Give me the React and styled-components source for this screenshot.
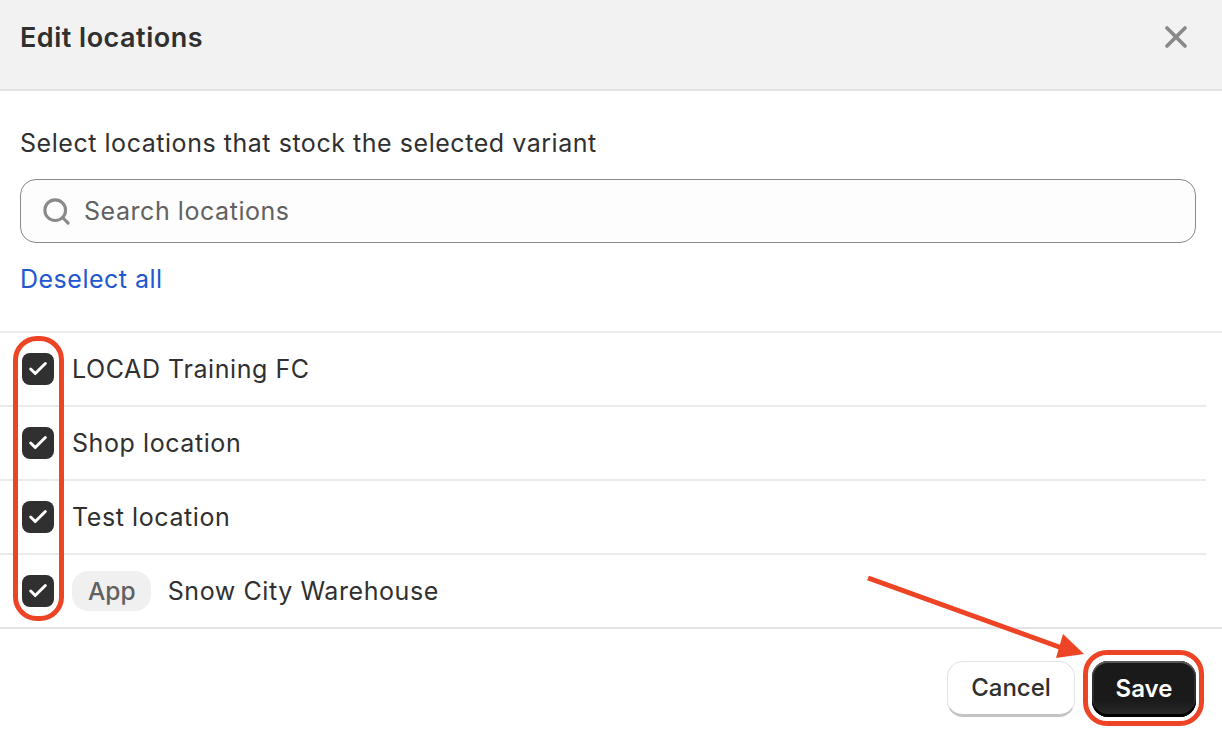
import React from "react";
import styled, { createGlobalStyle } from "styled-components";
import { Search, X, Check } from "lucide-react";

const locations = [
  { name: "LOCAD Training FC" },
  { name: "Shop location" },
  { name: "Test location" },
  { name: "Snow City Warehouse", badge: "App" },
];

export default function App() {
  return (
    <>
      <GlobalStyle />
      <Modal>
        <Header>
          <Title>Edit locations</Title>
          <CloseButton aria-label="Close">
            <X size={36} strokeWidth={2.5} />
          </CloseButton>
        </Header>

        <Body>
          <Prompt>Select locations that stock the selected variant</Prompt>
          <SearchBox>
            <Search size={31} strokeWidth={2.4} color="#8a8a8a" />
            <SearchInput placeholder="Search locations" />
          </SearchBox>
          <LinkButton>Deselect all</LinkButton>
        </Body>

        <List>
          <ColumnRing />
          {locations.map((loc, i) => (
            <Row key={loc.name} $last={i === locations.length - 1}>
              <CheckBox>
                <Check size={22} strokeWidth={3.2} color="#fff" />
              </CheckBox>
              {loc.badge && <Badge>{loc.badge}</Badge>}
              <RowLabel $badge={!!loc.badge}>{loc.name}</RowLabel>
            </Row>
          ))}
        </List>

        <Footer>
          <Arrow viewBox="0 0 240 100" aria-hidden="true">
            <line x1="2" y1="2" x2="196" y2="72" stroke="#ee4426" strokeWidth="5" />
            <polygon points="218,78 190,82 197,58" fill="#ee4426" />
          </Arrow>
          <CancelButton>Cancel</CancelButton>
          <SaveWrap>
            <SaveButton>Save</SaveButton>
            <SaveRing />
          </SaveWrap>
        </Footer>
      </Modal>
    </>
  );
}

const GlobalStyle = createGlobalStyle`
  html, body {
    margin: 0;
    padding: 0;
    background: #fff;
    overflow: hidden;
  }
  body {
    font-family: Inter, "Liberation Sans", sans-serif;
    color: #303030;
  }
  * {
    box-sizing: border-box;
  }
`;

const Modal = styled.div`
  width: 1222px;
  height: 736px;
  display: flex;
  flex-direction: column;
  background: #fff;
`;

const Header = styled.header`
  height: 91px;
  flex-shrink: 0;
  padding: 0 28px 15px 20px;
  display: flex;
  align-items: center;
  justify-content: space-between;
  background: #f2f2f2;
  border-bottom: 2px solid #e3e3e3;
`;

const Title = styled.h2`
  margin: 0;
  font-size: 27px;
  font-weight: 600;
  letter-spacing: 0.5px;
  color: #303030;
`;

const CloseButton = styled.button`
  display: flex;
  padding: 0;
  border: 0;
  background: none;
  color: #8a8a8a;
`;

const Body = styled.div`
  padding: 36px 26px 0 20px;
  height: 240px;
  flex-shrink: 0;
`;

const Prompt = styled.p`
  margin: 0 0 20px;
  font-size: 25px;
  line-height: 32px;
  letter-spacing: 0.54px;
  color: #303030;
`;

const SearchBox = styled.label`
  height: 64px;
  display: flex;
  align-items: center;
  gap: 12px;
  padding: 0 20px;
  background: #fdfdfd;
  border: 1.5px solid #8a8a8a;
  border-radius: 16px;
`;

const SearchInput = styled.input`
  flex: 1;
  border: 0;
  outline: 0;
  padding: 0;
  background: transparent;
  font-family: inherit;
  font-size: 25px;
  letter-spacing: 0.55px;
  color: #303030;

  &::placeholder {
    color: #616161;
    opacity: 1;
  }
`;

const LinkButton = styled.button`
  display: block;
  margin: 20px 0 0;
  padding: 0;
  border: 0;
  background: none;
  font-family: inherit;
  font-size: 25px;
  line-height: 32px;
  letter-spacing: 0.5px;
  color: #2158d1;
`;

const List = styled.div`
  position: relative;
  flex-shrink: 0;
  border-top: 2px solid #ebebeb;
  border-bottom: 2px solid #e3e3e3;
`;

const Row = styled.div`
  height: ${({ $last }) => ($last ? "72px" : "74px")};
  margin: 0 16px 0 0;
  display: flex;
  align-items: center;
  padding-left: 22px;
  border-bottom: ${({ $last }) => ($last ? "0" : "2px solid #ebebeb")};
`;

const CheckBox = styled.span`
  width: 32px;
  height: 32px;
  flex-shrink: 0;
  display: flex;
  align-items: center;
  justify-content: center;
  background: #303030;
  border-radius: 8px;
`;

const Badge = styled.span`
  margin-left: 18px;
  height: 40px;
  padding: 0 15px 0 16px;
  display: flex;
  align-items: center;
  font-size: 24.5px;
  font-weight: 500;
  color: #616161;
  background: #f0f0f0;
  border-radius: 16px;
`;

const RowLabel = styled.span`
  margin-left: ${({ $badge }) => ($badge ? "17px" : "18px")};
  font-size: 25px;
  letter-spacing: 0.58px;
  color: #303030;
`;

const ColumnRing = styled.div`
  position: absolute;
  left: 13px;
  top: 3px;
  width: 51px;
  height: 285px;
  border: 5px solid #ee4426;
  border-radius: 24px;
  z-index: 1;
`;

const Footer = styled.footer`
  position: relative;
  flex: 1;
  display: flex;
  justify-content: flex-end;
  align-items: flex-start;
  gap: 17px;
  padding: 32px 26px 0 0;
`;

const Arrow = styled.svg`
  position: absolute;
  left: 866px;
  top: -53px;
  width: 240px;
  height: 100px;
  z-index: 2;
`;

const CancelButton = styled.button`
  width: 128px;
  height: 56px;
  padding: 0 0 2px;
  font-family: inherit;
  font-size: 24px;
  font-weight: 500;
  color: #303030;
  background: #fff;
  border: 1.5px solid #e3e3e3;
  border-bottom: 3px solid #c4c4c4;
  border-radius: 16px;
`;

const SaveWrap = styled.div`
  position: relative;
  display: flex;
`;

const SaveButton = styled.button`
  width: 104px;
  height: 56px;
  padding: 0 0 2px;
  font-family: inherit;
  font-size: 24px;
  font-weight: 600;
  color: #fff;
  background: linear-gradient(#1a1a1a 70%, #2b2b2b);
  border: 0;
  border-radius: 16px;
  box-shadow: inset 0 2px 0 #5a5a5a, inset 0 -3px 0 #000, inset 2px 0 0 #2e2e2e,
    inset -2px 0 0 #2e2e2e;
`;

const SaveRing = styled.span`
  position: absolute;
  inset: -11px -8px -9px -9px;
  border: 5px solid #ee4426;
  border-radius: 24px;
  pointer-events: none;
`;
